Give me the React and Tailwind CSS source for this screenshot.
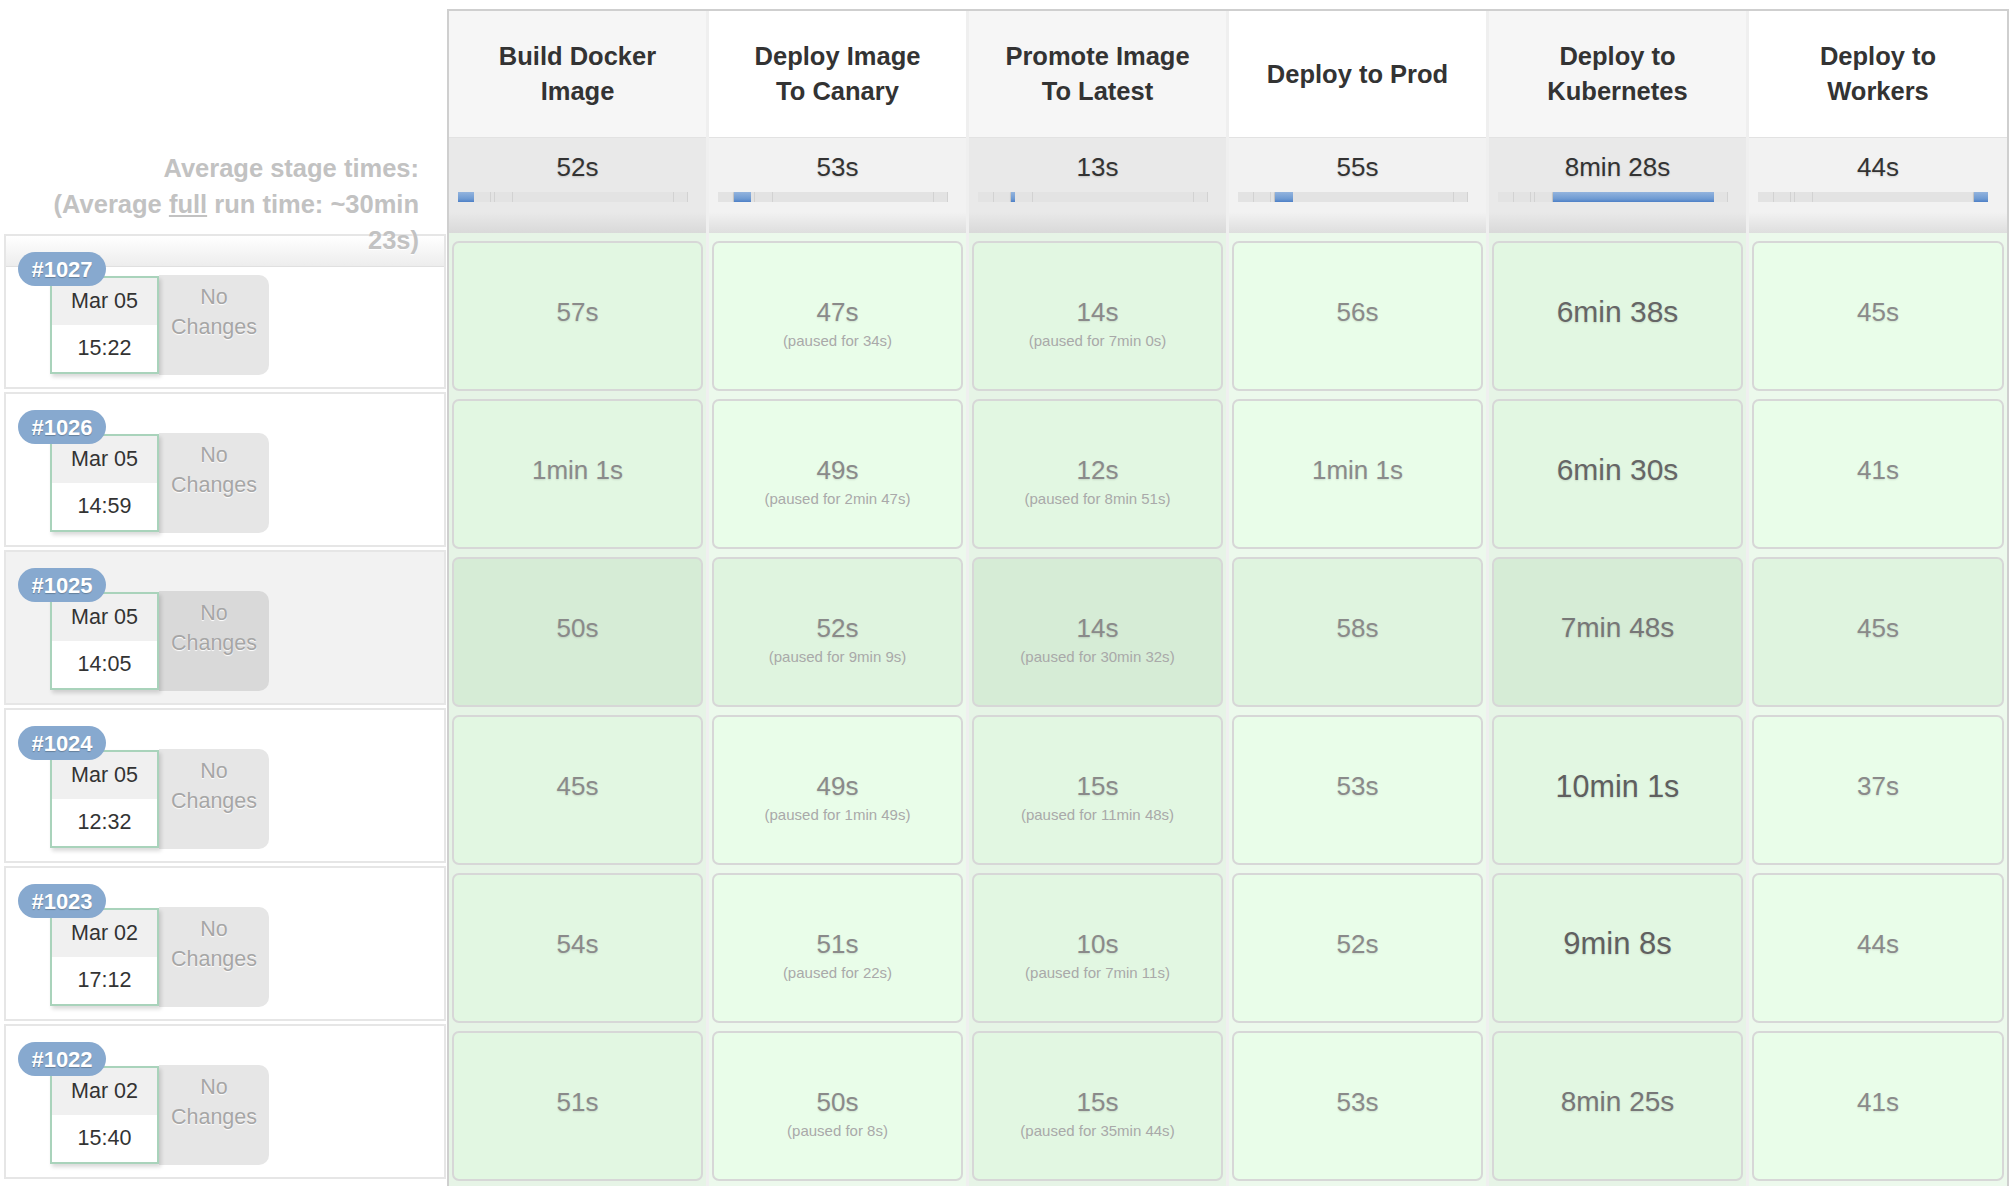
import React from "react";

const stages = [
  { name: ["Build Docker", "Image"], avg: "52s", sec: 52 },
  { name: ["Deploy Image", "To Canary"], avg: "53s", sec: 53 },
  { name: ["Promote Image", "To Latest"], avg: "13s", sec: 13 },
  { name: ["Deploy to Prod"], avg: "55s", sec: 55 },
  { name: ["Deploy to", "Kubernetes"], avg: "8min 28s", sec: 508 },
  { name: ["Deploy to", "Workers"], avg: "44s", sec: 44 },
];

const totalSec = stages.reduce((s, st) => s + st.sec, 0);

// big = kubernetes cells, shown larger / darker
const runs = [
  { id: "#1027", date: "Mar 05", time: "15:22", cells: [["57s"], ["47s", "34s"], ["14s", "7min 0s"], ["56s"], ["6min 38s", null, "a"], ["45s"]] },
  { id: "#1026", date: "Mar 05", time: "14:59", cells: [["1min 1s"], ["49s", "2min 47s"], ["12s", "8min 51s"], ["1min 1s"], ["6min 30s", null, "a"], ["41s"]] },
  { id: "#1025", date: "Mar 05", time: "14:05", hover: true, cells: [["50s"], ["52s", "9min 9s"], ["14s", "30min 32s"], ["58s"], ["7min 48s", null, "b"], ["45s"]] },
  { id: "#1024", date: "Mar 05", time: "12:32", cells: [["45s"], ["49s", "1min 49s"], ["15s", "11min 48s"], ["53s"], ["10min 1s", null, "c"], ["37s"]] },
  { id: "#1023", date: "Mar 02", time: "17:12", cells: [["54s"], ["51s", "22s"], ["10s", "7min 11s"], ["52s"], ["9min 8s", null, "d"], ["44s"]] },
  { id: "#1022", date: "Mar 02", time: "15:40", cells: [["51s"], ["50s", "8s"], ["15s", "35min 44s"], ["53s"], ["8min 25s", null, "b"], ["41s"]] },
];

const durStyle = {
  a: "text-[30px] text-[#666]",
  b: "text-[28px] text-[#777]",
  c: "text-[30.5px] text-[#5f5f5f]",
  d: "text-[31px] text-[#606060]",
};

function ProgressBar({ active }) {
  return (
    <div className="ml-[9px] mt-[9px] flex h-[10px] w-[230px] overflow-hidden bg-[#dcdcdc] shadow-[inset_0_1px_2px_rgba(0,0,0,0.12)]">
      {stages.map((st, i) => (
        <div
          key={i}
          style={{ width: (st.sec / totalSec) * 230 }}
          className={
            i === active
              ? "h-full bg-[linear-gradient(to_bottom,#93b4de,#6e9ad2_70%,#4d7fc6)] shadow-[0_1px_2px_rgba(0,0,0,0.2)]"
              : "h-full border-r border-[#d2d2d2] bg-[#e3e3e3]"
          }
        />
      ))}
    </div>
  );
}

function StageColumn({ stage, index }) {
  const odd = index % 2 === 0;
  const last = index === stages.length - 1;
  return (
    <div
      className={`flex w-[260px] shrink-0 flex-col ${last ? "border-r-2 border-[#cfcfcf]" : "border-r-[3px] border-[#efefef]"}`}
    >
      <div className={`flex h-[126px] flex-col items-center justify-center text-center text-[25.5px] font-bold leading-[35px] text-[#333] ${odd ? "bg-[#f6f6f6]" : "bg-white"}`}>
        {stage.name.map((l) => (
          <div key={l}>{l}</div>
        ))}
      </div>
      <div
        className={`h-[96px] border-t border-[#e2e2e2] pt-[13px] ${odd ? "bg-[linear-gradient(to_bottom,#e9e9e9_0%,#e9e9e9_78%,#d9d9d9_100%)]" : "bg-[linear-gradient(to_bottom,#f2f2f2_0%,#f2f2f2_78%,#dedede_100%)]"}`}
      >
        <div className="text-center text-[26px] leading-[32px] text-[#333] [text-shadow:0_1px_2px_rgba(0,0,0,0.15)]">{stage.avg}</div>
        <ProgressBar active={index} />
      </div>
      <div className={`flex-1 pt-[4px] ${odd ? "bg-[#e6f4e6]" : "bg-[#ecf9ec]"}`}>
        {runs.map((run) => {
          const [dur, paused, big] = run.cells[index];
          const bg = run.hover
            ? odd ? "bg-[#d6ecd6]" : "bg-[#dff4df]"
            : odd ? "bg-[#e2f7e2]" : "bg-[#e9fde9]";
          return (
            <div key={run.id} className="h-[158px] px-[3px] py-[4px]">
              <div className={`flex h-[150px] flex-col items-center rounded-[7px] border-2 border-[#d7d7d7] pt-[53px] ${bg}`}>
                <div className={`leading-[32px] [text-shadow:0_1px_2px_rgba(0,0,0,0.12)] ${big ? durStyle[big] : "text-[26px] text-[#8a8a8a]"}`}>{dur}</div>
                {paused && (
                  <div className="mt-[4px] text-[15px] leading-[18px] text-[#a9a9a9]">(paused for {paused})</div>
                )}
              </div>
            </div>
          );
        })}
      </div>
    </div>
  );
}

function RunLabel({ run, first }) {
  return (
    <div className="h-[158px] pt-[1px]">
      <div className={`relative ml-[4px] h-[155px] w-[442px] border-2 border-[#e6e6e6] ${run.hover ? "bg-[#f2f2f2]" : "bg-white"}`}>
        {first && <div className="h-[31px] border-b border-[#e0e0e0] bg-[linear-gradient(to_bottom,#ffffff,#ededed)]" />}
        <div className="absolute left-[12px] top-[16px] z-20 flex h-[34px] w-[88px] items-center justify-center rounded-full bg-[#87a9cf] text-[22px] font-bold text-white [text-shadow:0_1px_1px_rgba(0,0,0,0.25)]">
          {run.id}
        </div>
        <div className="absolute left-[44px] top-[40px] flex items-start">
          <div className="relative z-10 flex h-[98px] w-[109px] flex-col border-2 border-[#a9d3bb] shadow-[2px_3px_4px_rgba(0,0,0,0.15)]">
            <div className="flex h-[47px] items-center justify-center bg-[#f0f0f0] text-[21.5px] text-[#333]">{run.date}</div>
            <div className="flex h-[47px] items-center justify-center bg-white text-[21.5px] text-[#333]">{run.time}</div>
          </div>
          <div className={`-mt-[1px] h-[100px] w-[110px] rounded-r-[10px] pt-[7px] text-center text-[21.5px] leading-[30px] text-[#a6a6a6] [text-shadow:0_1px_1px_#fff] ${run.hover ? "bg-[#d9d9d9]" : "bg-[#e6e6e6]"}`}>
            <div>No</div>
            <div>Changes</div>
          </div>
        </div>
      </div>
    </div>
  );
}

export default function App() {
  return (
    <div className="flex h-[1186px] w-[2014px] overflow-hidden bg-white font-['Liberation_Sans',Arial,sans-serif]">
      <div className="w-[447px] shrink-0">
        <div className="h-[137px]" />
        <div className="relative z-10 h-[96px] pr-[28px] pt-[13px] text-right text-[25.5px] font-bold leading-[36px] text-[#c2c2c2] [text-shadow:0_1px_1px_#fff]">
          <div>Average stage times:</div>
          <div>
            (Average <span className="underline">full</span> run time: ~30min
          </div>
          <div>23s)</div>
        </div>
        {runs.map((run, i) => (
          <RunLabel key={run.id} run={run} first={i === 0} />
        ))}
      </div>
      <div className="mt-[9px] flex border-l-2 border-t-2 border-[#cfcfcf]">
        {stages.map((st, i) => (
          <StageColumn key={i} stage={st} index={i} />
        ))}
      </div>
    </div>
  );
}
